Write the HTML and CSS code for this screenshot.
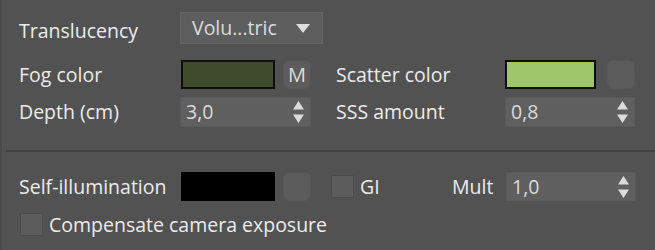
FILE: index.html
```html
<!DOCTYPE html>
<html>
<head>
<meta charset="utf-8">
<link rel="stylesheet" href="styles.css">
</head>
<body>
<div class="panel">
  <div class="row r1">
    <span class="label lab-l t1">Translucency</span>
    <div class="dropdown"><span class="dd-text">Volu...tric</span>
      <svg class="dd-tri" width="14" height="9" viewBox="0 0 14 9"><polygon points="0,0 14,0 7,9" fill="#dedede"/></svg>
    </div>
  </div>
  <div class="row r2">
    <span class="label lab-l">Fog color</span>
    <div class="swatch fog"></div>
    <div class="btn">M</div>
    <span class="label lab-r">Scatter color</span>
    <div class="swatch scatter"></div>
    <div class="btn"></div>
  </div>
  <div class="row r3">
    <span class="label lab-l">Depth (cm)</span>
    <div class="spinner"><span class="val">3,0</span>
      <svg class="arrows" width="11" height="22" viewBox="0 0 11 22"><polygon points="5.5,0 11,8.5 0,8.5" fill="#dcdcdc"/><polygon points="0,13.5 11,13.5 5.5,22" fill="#dcdcdc"/></svg>
    </div>
    <span class="label lab-r">SSS amount</span>
    <div class="spinner sp-r"><span class="val">0,8</span>
      <svg class="arrows" width="11" height="22" viewBox="0 0 11 22"><polygon points="5.5,0 11,8.5 0,8.5" fill="#dcdcdc"/><polygon points="0,13.5 11,13.5 5.5,22" fill="#dcdcdc"/></svg>
    </div>
  </div>
  <div class="divider"></div>
  <div class="row r4">
    <span class="label lab-l">Self-illumination</span>
    <div class="swatch black"></div>
    <div class="btn"></div>
    <div class="check gi-check"></div>
    <span class="label gi">GI</span>
    <span class="label mult">Mult</span>
    <div class="spinner sp-r"><span class="val">1,0</span>
      <svg class="arrows" width="11" height="22" viewBox="0 0 11 22"><polygon points="5.5,0 11,8.5 0,8.5" fill="#dcdcdc"/><polygon points="0,13.5 11,13.5 5.5,22" fill="#dcdcdc"/></svg>
    </div>
  </div>
  <div class="row r5">
    <div class="check"></div>
    <span class="label comp">Compensate camera exposure</span>
  </div>
</div>
</body>
</html>
```

FILE: styles.css
```css
html, body {
  margin: 0;
  padding: 0;
  background: #525252;
}
.panel {
  width: 655px;
  height: 250px;
  box-sizing: border-box;
  border-left: 2px solid #4a4a4a;
  padding-top: 12px;
  font-family: "Open Sans", "Noto Sans", sans-serif;
  font-size: 19.5px;
  color: #ececec;
  overflow: hidden;
}
.row {
  display: flex;
  align-items: center;
  padding-left: 17px;
}
.label {
  white-space: nowrap;
  line-height: 22px;
}
.lab-l {
  width: 161px;
  flex: none;
}
.t1 { position: relative; top: 3px; }
.r1 { height: 32px; }
.r2 { height: 29px; margin-top: 16px; }
.r3 { height: 30px; margin-top: 8px; }
.r4 { height: 29px; margin-top: 20px; }
.r5 { height: 23px; margin-top: 12px; }

.dropdown {
  width: 143px;
  height: 32px;
  box-sizing: border-box;
  background: #5e5e5e;
  border: 1px solid #646464;
  display: flex;
  align-items: center;
  justify-content: space-between;
  padding: 0 12px 0 11px;
  color: #dcdcdc;
}
.dd-text { line-height: 22px; }
.swatch {
  width: 94px;
  height: 29px;
  box-sizing: border-box;
  border: 2px solid #0e0e0e;
  margin-left: 1px;
  flex: none;
}
.fog { background: #3f4b2b; }
.scatter { background: #a0c66b; width: 91px; margin-left: 0; }
.black { background: #000; border-color: #000; }
.btn {
  width: 28px;
  height: 29px;
  box-sizing: border-box;
  background: #5c5c5c;
  border: 1px solid #575757;
  border-radius: 6px;
  margin-left: 8px;
  flex: none;
  display: flex;
  align-items: center;
  justify-content: center;
  color: #dcdcdc;
  font-size: 20px;
}
.scatter + .btn { margin-left: 11px; }
.lab-r { margin-left: 25px; width: 169px; flex: none; }
.spinner {
  width: 131px;
  height: 30px;
  box-sizing: border-box;
  background: #5f5f5f;
  border: 1px solid #5a5a5a;
  display: flex;
  align-items: center;
  justify-content: space-between;
  padding: 0 6px 0 5px;
  color: #dadada;
  flex: none;
}
.sp-r { width: 130px; }
.val { line-height: 22px; }
.arrows { display: block; }
.check {
  width: 23px;
  height: 23px;
  box-sizing: border-box;
  background: #5c5c5c;
  border: 1px solid #4c4c4c;
  flex: none;
}
.gi-check { margin-left: 20px; }
.gi { margin-left: 6px; width: 92px; flex: none; }
.mult { width: 54px; flex: none; }
.r4 .sp-r { height: 29px; }
.r5 .check { margin-left: 1px; }
.comp { margin-left: 6px; }
.divider {
  margin-top: 23px;
  margin-left: 4px;
  height: 2px;
  background: #424242;
}
```
